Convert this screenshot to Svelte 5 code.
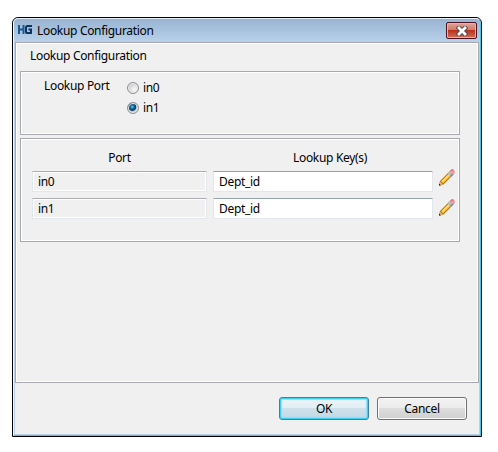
<script>
  let selected = $state('in1');
  const ports = ['in0', 'in1'];
  const rows = [
    { port: 'in0', key: 'Dept_id' },
    { port: 'in1', key: 'Dept_id' }
  ];
</script>

<div class="page">
  <div class="window">
    <div class="frame">
      <header class="titlebar">
        <svg class="logo" width="16" height="14" viewBox="0 0 16 14">
          <path d="M2 3v9M6.5 3v9M2 7.5h5" stroke="#1b5a90" stroke-width="2" fill="none" />
          <path d="M15 4H10.6Q9 4 9 5.6V9.4Q9 11 10.6 11H14V7.5H11.5" stroke="#0d3560" stroke-width="2" fill="none" />
        </svg>
        <span class="title">Lookup Configuration</span>
        <button class="close" aria-label="Close">
          <svg width="12" height="10" viewBox="0 0 12 10">
            <path d="M3 2 9 8M9 2 3 8" stroke="#53424b" stroke-width="4.6" stroke-linecap="square" fill="none" />
            <path d="M3 2 9 8M9 2 3 8" stroke="#fff" stroke-width="2.8" stroke-linecap="square" fill="none" />
          </svg>
        </button>
      </header>
      <main class="client">
        <section class="body">
          <h1>Lookup Configuration</h1>
          <div class="group lookup">
            <span class="label">Lookup Port</span>
            <div class="radios">
              {#each ports as p}
                <button class="option" onclick={() => (selected = p)}>
                  <span class="radio" class:checked={selected === p}></span>
                  <span>{p}</span>
                </button>
              {/each}
            </div>
          </div>
          <div class="group keys">
            <div class="row heads">
              <span class="port-head">Port</span>
              <span class="key-head">Lookup Key(s)</span>
            </div>
            {#each rows as row}
              <div class="row">
                <div class="field readonly">{row.port}</div>
                <div class="field value">{row.key}</div>
                <svg class="pencil" width="18" height="18" viewBox="0 0 18 18">
                  <path d="M2 12 11.7 2.3 15.2 5.8 5.5 15.4 1 16.5Z" fill="#c77908" />
                  <path d="M3.4 12.2 11 4.6 12.8 6.4 5 14.2Z" fill="#ffc94c" />
                  <path d="M3.7 12.2 11 4.9 11.8 5.7 4.3 13.2Z" fill="#ffe18a" />
                  <path d="M9.4 4.6 12.5 1.5 16 5 12.9 8.1Z" fill="#b9bbbd" />
                  <path d="M11.8 7 14.8 4.2 15.8 5.2 12.9 8.1Z" fill="#858a90" />
                  <path d="M11.9 2.1 13.3 .8Q14.7 .1 15.9 .9T16.9 3.9L15.4 5.4Z" fill="#f09a9b" />
                  <path d="M12.2 2.2 13.6.9 15.6 1" stroke="#d9535e" fill="none" />
                  <path d="M2 12.7 1 16.5 4.6 15.3Z" fill="#e8bd82" />
                  <path d="M1 14.6V16.5H3Z" fill="#171310" />
                </svg>
              </div>
            {/each}
          </div>
        </section>
        <footer>
          <button class="btn ok">OK</button>
          <button class="btn">Cancel</button>
        </footer>
      </main>
    </div>
  </div>
</div>

<style>
  :global(body) { background: #fff; }
  .page {
    box-sizing: border-box;
    width: 498px;
    height: 452px;
    padding: 17px 16px 15px 12px;
    background: #fff;
    font: 12px/16px "Noto Sans", "Open Sans", sans-serif;
    letter-spacing: -0.32px;
    color: #000;
  }
  * { box-sizing: border-box; }
  button { font: inherit; letter-spacing: inherit; color: inherit; padding: 0; }
  .window {
    width: 470px;
    height: 420px;
    border: 1px solid #000;
    border-radius: 6px 6px 0 0;
    background: #b9d1ea;
    overflow: hidden;
  }
  .frame {
    height: 418px;
    border: 1px solid #3fc8e8;
    border-top-color: #e8f1fa;
    border-left-color: #f4f8fc;
    border-radius: 5px 5px 0 0;
    padding: 0 1px 1px;
    background: linear-gradient(#98b4d2, #b9d1ea 23px);
  }
  .titlebar {
    display: flex;
    height: 23px;
    padding: 0 2px 0 2px;
  }
  .logo { margin-top: 3px; }
  .title { margin: 4px auto 0 4px; }
  .close {
    display: flex;
    align-items: center;
    justify-content: center;
    width: 31px;
    height: 17px;
    margin-top: 3px;
    border: 1px solid #4b1222;
    border-radius: 2px;
    background: linear-gradient(#e0a598, #cf7868 48%, #b9321c 50%, #d1715a);
    box-shadow: inset 0 0 0 1px #e9b2a5;
  }
  .client {
    height: 392px;
    background: #f0f0f0;
  }
  .body {
    height: 341px;
    padding: 5px 17px 0 4px;
    border: 1px solid #a8a8ae;
    box-shadow: inset 0 0 0 1px #fff;
  }
  h1 { margin: 0 0 7px 10px; font-size: 12px; font-weight: 400; line-height: 16px; }
  .group {
    width: 440px;
    border: 1px solid #a8a9ae;
    box-shadow: inset 0 0 0 1px #fff;
  }
  .lookup { display: flex; height: 64px; padding: 6px 0 0 23px; }
  .label { width: 83px; white-space: nowrap; }
  .radios { display: flex; flex-direction: column; gap: 4px; padding-top: 2px; }
  .option { display: flex; align-items: center; height: 16px; gap: 4px; border: 0; background: none; }
  .radio {
    width: 12px;
    height: 12px;
    border: 1px solid #8c8e91;
    border-radius: 50%;
    background: radial-gradient(circle at 65% 65%, #f2f2f2 15%, #c4c8cc 75%);
    box-shadow: inset 0 0 0 1px #f0f0f0;
  }
  .radio.checked {
    background: radial-gradient(circle at 42% 38%, #74d3f5 0, #187daf 18%, #0c385e 43%, #bdc9d2 53%);
  }
  .keys { height: 104px; margin-top: 3px; padding: 11px 0 0 11px; }
  .row { display: flex; height: 21px; margin-bottom: 6px; }
  .heads { height: 16px; margin-bottom: 5px; }
  .port-head { width: 175px; text-align: center; }
  .key-head { width: 220px; margin-left: 13px; text-align: center; }
  .field {
    height: 21px;
    padding: 2px 5px;
    border: 1px solid #e2e6ed;
    border-top-color: #abadb3;
    border-radius: 1px;
  }
  .readonly { width: 175px; box-shadow: inset 0 0 0 1px #fff; }
  .value { width: 220px; margin-left: 6px; border-top-color: #94a2ae; background: #fff; }
  .pencil { margin: -2px 0 0 5px; }
  .row:last-child .pencil { margin-top: 1px; }
  footer { display: flex; justify-content: flex-end; gap: 8px; padding: 14px 12px 0 0; }
  .btn {
    width: 90px;
    height: 23px;
    border: 1px solid #707070;
    border-radius: 3px;
    background: linear-gradient(#f2f2f2, #ebebeb 49%, #dddddd 50%, #cfcfcf);
    box-shadow: inset 0 0 0 1px #fcfcfc;
  }
  .ok {
    border-color: #3c7fb1;
    background: linear-gradient(#eef5f8, #e0eef4 49%, #cee1eb 50%, #c0d8e5);
    box-shadow: inset 0 0 0 1px #3ed0f7, inset 0 0 1px 2px #8fe0f7;
  }
</style>
